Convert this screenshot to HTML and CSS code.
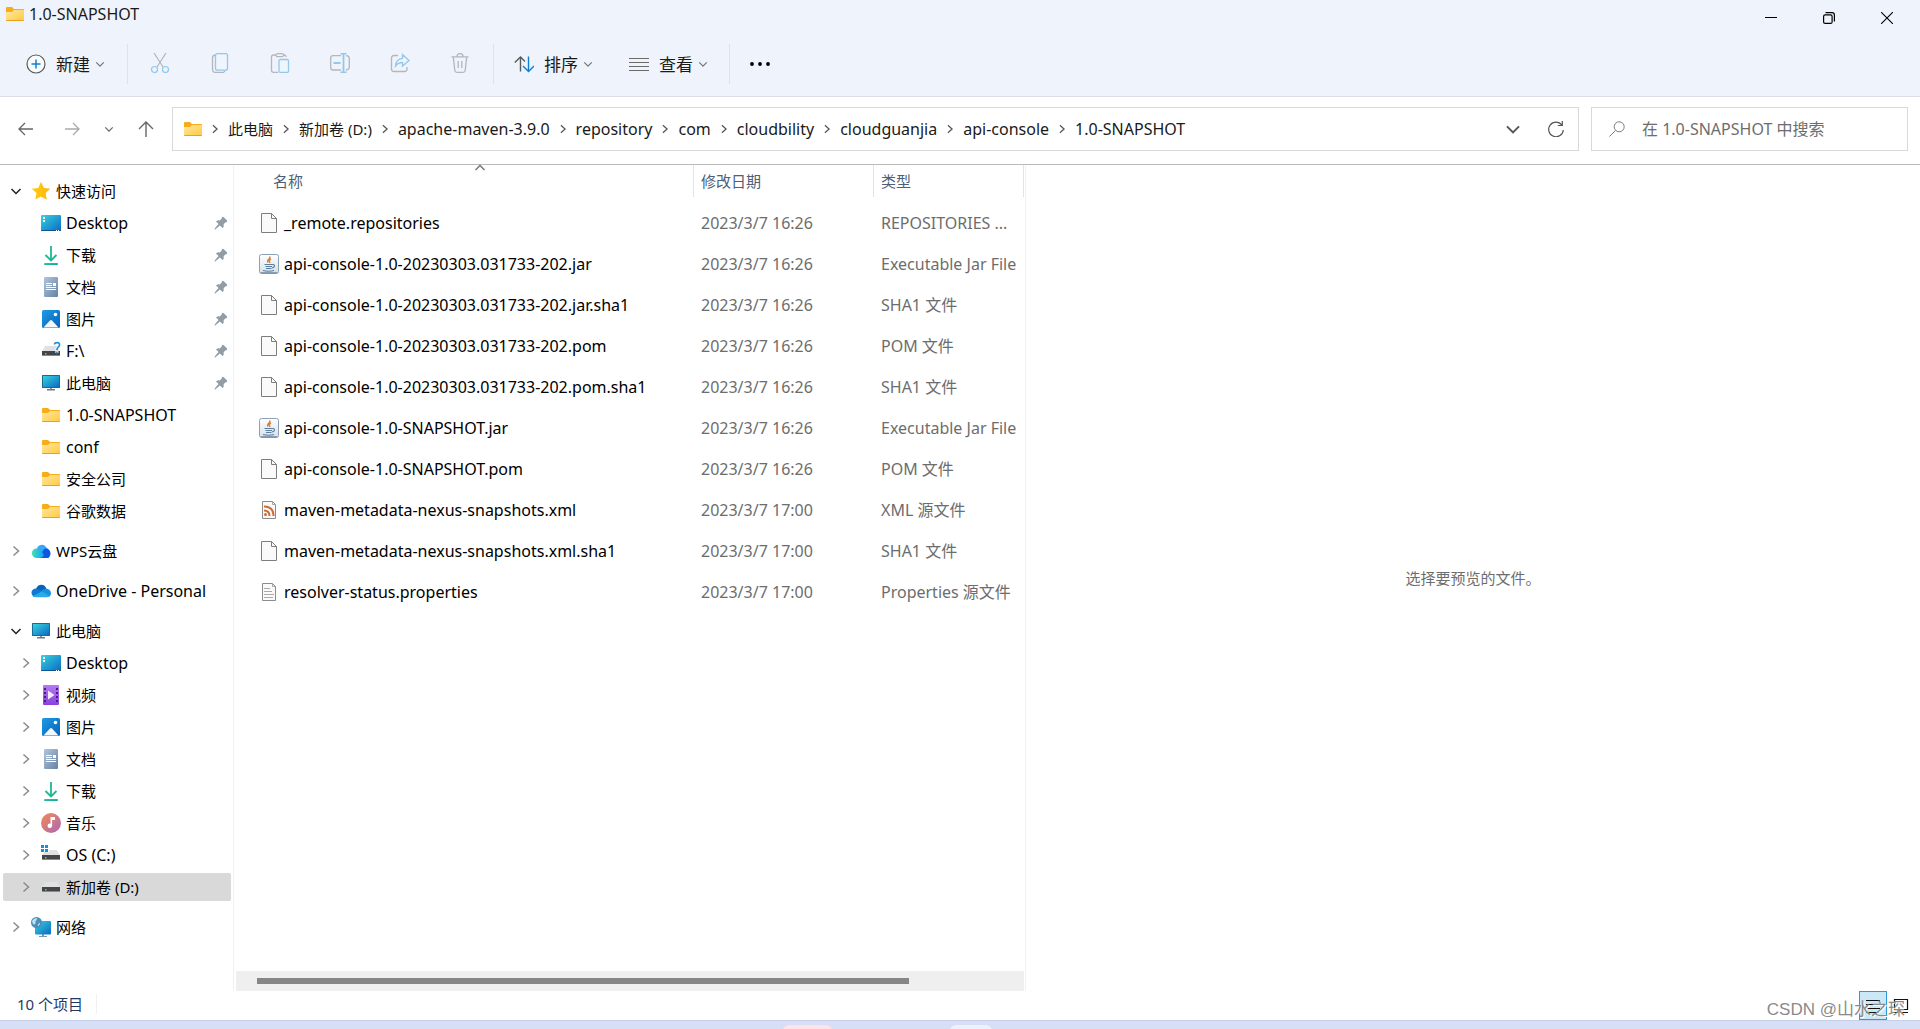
FILE: index.html
```html
<!DOCTYPE html>
<html lang="zh-CN">
<head>
<meta charset="utf-8">
<title>1.0-SNAPSHOT</title>
<link rel="stylesheet" href="styles.css">
</head>
<body>
<svg class="sprite" aria-hidden="true">
  <defs>
    <linearGradient id="g-folder" x1="0" y1="0" x2="1" y2="1"><stop offset="0" stop-color="#ffe7a2"/><stop offset="1" stop-color="#ffca3d"/></linearGradient>
    <linearGradient id="g-screen" x1="0" y1="0" x2="1" y2="1"><stop offset="0" stop-color="#36d3e0"/><stop offset="1" stop-color="#0c6ac2"/></linearGradient>
    <linearGradient id="g-down" x1="0" y1="0" x2="1" y2="1"><stop offset="0" stop-color="#3cc98a"/><stop offset="1" stop-color="#0fa3a3"/></linearGradient>
    <linearGradient id="g-doc" x1="0" y1="0" x2="1" y2="1"><stop offset="0" stop-color="#b4c5dc"/><stop offset="1" stop-color="#6483a8"/></linearGradient>
    <linearGradient id="g-pic" x1="0" y1="0" x2="1" y2="1"><stop offset="0" stop-color="#1e9be6"/><stop offset="1" stop-color="#0861b5"/></linearGradient>
    <linearGradient id="g-video" x1="0" y1="0" x2="0" y2="1"><stop offset="0" stop-color="#b57af2"/><stop offset="1" stop-color="#8a3fe0"/></linearGradient>
    <linearGradient id="g-music" x1="0" y1="0" x2="1" y2="1"><stop offset="0" stop-color="#f58a4f"/><stop offset="1" stop-color="#a967bd"/></linearGradient>
    <linearGradient id="g-wps" x1="0" y1="0" x2="1" y2="0"><stop offset="0" stop-color="#3be3b4"/><stop offset="1" stop-color="#1aa0f5"/></linearGradient>
    <linearGradient id="g-jar" x1="0" y1="0" x2="0" y2="1"><stop offset="0" stop-color="#ffffff"/><stop offset="1" stop-color="#d5e0ea"/></linearGradient>
  </defs>
  <symbol id="folder" viewBox="0 0 20 20"><path d="M1 4q0-1 1-1h5l2 2h9q1 0 1 1v4H1z" fill="#f8ac18"/><path d="M1 8h6l2-2h9q1 0 1 1v9q0 1-1 1H2q-1 0-1-1z" fill="url(#g-folder)"/><path d="M1 16h18q0 1-1 1H2q-1 0-1-1z" fill="#e8a31c"/></symbol>
  <symbol id="star" viewBox="0 0 20 20"><path d="M10 1l2.800 5.900 6.400.8-4.700 4.400 1.200 6.400L10 15.400l-5.700 3.100 1.200-6.400L.8 7.700l6.400-.8z" fill="#ffc50f"/><path d="M10 1l2.800 5.900 6.400.8-4.700 4.400 1.200 6.400L10 15.400z" fill="#fdb813" opacity=".5"/></symbol>
  <symbol id="desktop" viewBox="0 0 20 20"><rect y="2" width="20" height="16" rx="1" fill="url(#g-screen)"/><path d="M0 17h20q0 1-1 1H1q-1 0-1-1z" fill="#0a5593"/><path d="M2 4h2v2H2zM2 7h2v2H2z" fill="#fff"/><path d="M15 17h1v1h-1zM17 17h1v1h-1z" fill="#fff"/></symbol>
  <symbol id="download" viewBox="0 0 20 20"><path d="M10 1v14M4.500 10l5.500 5.500L15.500 10" fill="none" stroke="#1fb795" stroke-width="1.800"/><rect x="3" y="18" width="14" height="2" rx="1" fill="url(#g-down)"/></symbol>
  <symbol id="document" viewBox="0 0 20 20"><rect x="3" width="14" height="20" rx="1" fill="url(#g-doc)"/><path d="M5 6h6v1H5zM5 8h6v1H5zM12 6h3v3h-3zM5 10h10v1H5zM5 12h10v1H5z" fill="#fff"/></symbol>
  <symbol id="picture" viewBox="0 0 20 20"><rect x="1" y="1" width="18" height="18" rx="1.500" fill="url(#g-pic)"/><circle cx="14.500" cy="5.500" r="1.800" fill="#fff"/><path d="M2.500 18.500L9 11.500q1-1 2 0l6.500 7z" fill="#f2f8fd"/></symbol>
  <symbol id="drive" viewBox="0 0 20 20"><path d="M4 5h12l3 6H1z" fill="#dfe1e4"/><rect x="1" y="10" width="18" height="5" fill="#454545"/><rect x="1" y="14" width="18" height="1" fill="#8a8a8a"/><rect x="4" y="12" width="1.500" height="1.500" fill="#3ae04e"/></symbol>
  <symbol id="drive-unknown" viewBox="0 0 20 20"><use href="#drive"/><path d="M13.500 3.500C13.500 1 19 .6 18.500 4c-.2 2-2.600 2.200-2.600 5M15.900 10v2" fill="none" stroke="#fff" stroke-width="3"/><path d="M13.500 3.500C13.500 1 19 .6 18.500 4c-.2 2-2.600 2.200-2.600 5M15.900 10.500v2" fill="none" stroke="#1d8fd8" stroke-width="1.700"/></symbol>
  <symbol id="drive-os" viewBox="0 0 20 20"><use href="#drive"/><path d="M0 0h8v7H0z" fill="#fff"/><path d="M0 0h3v3H0zM4 0h3v3H4zM0 4h3v3H0zM4 4h3v3H4z" fill="#1090df"/></symbol>
  <symbol id="computer" viewBox="0 0 20 20"><path d="M9 14h2v3H9z" fill="#8298a8"/><rect x="6" y="16" width="8" height="1.500" fill="#6c7c88"/><rect x="1" y="2" width="18" height="13" rx=".5" fill="#186c91"/><rect x="2" y="3" width="16" height="11" fill="url(#g-screen)"/></symbol>
  <symbol id="wps" viewBox="0 0 20 20"><path d="M6 8a5 5 0 0 1 9-2l3 4v7H7z" fill="#37a5fa"/><path d="M13 8c4-2 6.500 1.500 6.500 4.500S17.500 17 15.500 17H8z" fill="#0c58df"/><path d="M9.500 16.900H5A4.700 4.700 0 1 1 9 9c2 1.500 5 5 3 6.500-.8 1-1.500 1.400-2.500 1.400z" fill="url(#g-wps)"/></symbol>
  <symbol id="onedrive" viewBox="0 0 20 20"><path d="M5 8C6.500 2.500 14 2 15.500 8L9 12z" fill="#0663b5"/><path d="M1.500 14.500C-1 11 1.500 7.500 5 7.500c3 0 5 2.500 8 4l-6 4.500H4q-1.700 0-2.500-1.500z" fill="#1078d4"/><path d="M11 9.500c2-2.500 8.500-2.500 9 2.500 0 2-1 4-4 4l-10-2z" fill="#1590df"/><path d="M2 15l9-4.500 8 4.500q-1 1.200-3 1.200H4.500Q3 16.200 2 15z" fill="#29a9ea"/></symbol>
  <symbol id="video" viewBox="0 0 20 20"><rect x="2" width="16" height="20" rx="1" fill="url(#g-video)"/><path d="M3 3h2v2H3zM3 7h2v2H3zM3 11h2v2H3zM3 15h2v2H3zM15 3h2v2h-2zM15 7h2v2h-2zM15 11h2v2h-2zM15 15h2v2h-2z" fill="#47216f"/><path d="M7 5.500v9L13.500 10z" fill="#f4eafc"/></symbol>
  <symbol id="music" viewBox="0 0 20 20"><circle cx="10" cy="10" r="10" fill="url(#g-music)"/><circle cx="8.800" cy="12.800" r="2.300" fill="#fff"/><path d="M9.500 4h4.500v3h-2.900v6H9.500z" fill="#fff"/></symbol>
  <symbol id="network" viewBox="0 0 20 20"><path d="M11 17h2v2h-2z" fill="#8298a8"/><rect x="8" y="19" width="8" height="1" fill="#8298a8"/><rect x="4" y="4" width="16" height="13.500" rx="1" fill="url(#g-screen)"/><circle cx="5.500" cy="5.500" r="5.500" fill="#4d8fb8"/><path d="M1 4c2-3 4-3 5-2.500S4 4 4.500 5.500 3 8 2 7zM6.500 8l2.500-2.500q.3 2-1.700 3.500z" fill="#bfe1f1"/></symbol>
  <symbol id="pin" viewBox="0 0 14 14"><path d="M8 1.200q.9-.9 1.800 0l3 3q.9.900 0 1.800-.6.500-1.300.3L9.600 8.200q.5 1.800-.4 3.200l-.6.600-2.700-2.600L1.500 13.300.5 13.500.7 12.500 4.600 8.100 2 5.500l.6-.6Q4 4 5.800 4.500L7.700 2.500Q7.500 1.800 8 1.200z" fill="#919ca5"/></symbol>
  <symbol id="file" viewBox="0 0 20 20"><path d="M2.500.5h10l5 5v14h-15z" fill="#fafafa" stroke="#7d7d7d"/><path d="M12.500.5v5h5" fill="none" stroke="#7d7d7d"/></symbol>
  <symbol id="jar" viewBox="0 0 20 20"><rect x=".5" y=".5" width="19" height="19" rx="2" fill="url(#g-jar)" stroke="#8ba0b4"/><path d="M2 18.800h16" stroke="#65809c"/><path d="M10.500 2.500c2 2-3.500 3-1.500 6M12 5c-2 1-2.200 2-1 4" fill="none" stroke="#e8792b" stroke-width="1.400"/><path d="M5.500 10.500h8M6.500 12.500h6.500M7 14.500h5.500M4 16.500q6 1.500 11 0M13.500 10.500q3 .2 1.500 2.500l-2 1" fill="none" stroke="#5c7f9f" stroke-width="1.200"/></symbol>
  <symbol id="xml" viewBox="0 0 20 20"><path d="M3.500 1.500h10l3 3v14h-13z" fill="#fafafa" stroke="#8b8b8b"/><path d="M13.500 1.500v3h3" fill="none" stroke="#a5a5a5"/><path d="M5 6.500q9.500 0 9.500 9.500M5 10.500q5.500 0 5.500 5.500" fill="none" stroke="#d06b32" stroke-width="2"/><circle cx="6.500" cy="14.500" r="1.500" fill="#d06b32"/></symbol>
  <symbol id="properties" viewBox="0 0 20 20"><path d="M3.500 1.500h10l3 3v14h-13z" fill="#fafafa" stroke="#8b8b8b"/><path d="M13.500 1.500v3h3" fill="none" stroke="#a5a5a5"/><path d="M5 6.500h6M5 9.500h8M5 12.500h10M5 15.500h9" stroke="#a9a9a9"/></symbol>
  <symbol id="chev-right" viewBox="0 0 12 12"><path d="M3.500 1.500L8.500 6l-5 4.500" fill="none" stroke="currentColor" stroke-width="1.500"/></symbol>
  <symbol id="chev-down" viewBox="0 0 12 12"><path d="M1.500 4L6 8.500 10.500 4" fill="none" stroke="currentColor" stroke-width="1.500"/></symbol>
  <symbol id="new" viewBox="0 0 20 20"><circle cx="10" cy="10" r="9" fill="#f9fafc" stroke="#5b5b5b" stroke-width="1.200"/><path d="M10 5.500v9M5.500 10h9" stroke="#0f7fd6" stroke-width="1.500"/></symbol>
  <symbol id="cut" viewBox="0 0 20 20"><g fill="none" stroke-width="1.200"><path d="M4 0l9 14M16 0L7 14" stroke="#b4b6bb"/><circle cx="4.500" cy="16.500" r="3" stroke="#93c7ec"/><circle cx="15.500" cy="16.500" r="3" stroke="#93c7ec"/></g></symbol>
  <symbol id="copy" viewBox="0 0 20 20"><g fill="none" stroke-width="1.300"><path d="M5 2q-2.500.5-2.500 3v11q0 3.500 3.500 3.500h6q2 0 3-1.500" stroke="#b4b6bb"/><rect x="5.500" y=".7" width="12" height="16.500" rx="2" fill="#eef5fc" stroke="#93c7ec"/></g></symbol>
  <symbol id="paste" viewBox="0 0 20 20"><g fill="none" stroke-width="1.300"><path d="M8 19.300H3.500q-2 0-2-2V4q0-2 2-2H6M13 2h1.500Q16 2 16 4" stroke="#b4b6bb"/><rect x="6" y=".7" width="7.500" height="3" rx="1.500" stroke="#b4b6bb"/><rect x="9" y="6.500" width="9.500" height="13" rx="1.500" fill="#eef5fc" stroke="#93c7ec"/></g></symbol>
  <symbol id="rename" viewBox="0 0 20 20"><g fill="none" stroke-width="1.300"><path d="M11 17H3q-2.300 0-2.300-2.300V5Q.7 2.700 3 2.700h8M16 2.700q3.300 0 3.300 2.800V14q0 2.700-3.300 3" stroke="#b4b6bb"/><path d="M10.500.7h6M10.500 19.300h6M13.500.7v18.600M3.500 10h7" stroke="#93c7ec" stroke-width="1.800"/></g></symbol>
  <symbol id="share" viewBox="0 0 20 20"><g fill="none" stroke-width="1.300"><path d="M8 2.500H4Q1.500 2.500 1.500 5v11q0 2.500 2.500 2.500h10.500q2.500 0 2.500-2.500v-2" stroke="#b4b6bb"/><path d="M12.500 1.500L19 7.500l-6.500 5.500V9.500Q8 9.500 5.500 13 6 6 12.500 5.300z" stroke="#93c7ec" fill="#eef5fc"/></g></symbol>
  <symbol id="trash" viewBox="0 0 20 20"><g fill="none" stroke="#b4b6bb" stroke-width="1.300"><path d="M1.500 3.800h17M7 3.500Q7 .7 10 .7t3 2.800M3.300 4l1.500 13.500q.3 1.800 2 1.800h6.400q1.700 0 2-1.800L16.700 4M8.200 8v7M11.800 8v7"/></g></symbol>
  <symbol id="sort" viewBox="0 0 20 20"><g fill="none" stroke-width="1.400"><path d="M6.500 17.500V3M.8 8.500L6.500 3 11 7.500" stroke="#5b5b5b"/><path d="M14.500 2.500V17M9 12l5.500 5.500L20 12" stroke="#0f7fd6"/></g></symbol>
  <symbol id="view" viewBox="0 0 20 20"><path d="M0 4.500h20M0 8.500h20M0 12.500h20M0 16.500h20" stroke="#6a6a6a"/></symbol>
  <symbol id="dots" viewBox="0 0 20 20"><circle cx="2" cy="10" r="1.900"/><circle cx="10" cy="10" r="1.900"/><circle cx="18" cy="10" r="1.900"/></symbol>
  <symbol id="left" viewBox="0 0 16 16"><path d="M1 8h14M7 2L1 8l6 6" fill="none" stroke="currentColor" stroke-width="1.300"/></symbol>
  <symbol id="right" viewBox="0 0 16 16"><path d="M15 8H1M9 2l6 6-6 6" fill="none" stroke="currentColor" stroke-width="1.300"/></symbol>
  <symbol id="up" viewBox="0 0 16 16"><path d="M8 16V1M1 8l7-7 7 7" fill="none" stroke="currentColor" stroke-width="1.400"/></symbol>
  <symbol id="refresh" viewBox="0 0 16 16"><path d="M13.800 4A7.300 7.300 0 1 0 15.300 9M14.300 0v4.500H9.800" fill="none" stroke="currentColor" stroke-width="1.200"/></symbol>
  <symbol id="search" viewBox="0 0 16 16"><circle cx="10.200" cy="5.800" r="5" fill="none" stroke="#7b7b7b"/><path d="M6.500 9.500l-6 6" stroke="#7b7b7b"/></symbol>
  <symbol id="min" viewBox="0 0 12 12"><path d="M0 5.500h12" stroke="#000"/></symbol>
  <symbol id="restore" viewBox="0 0 12 12"><rect x=".6" y="2.900" width="8.500" height="8.500" rx="1.500" fill="none" stroke="#000" stroke-width="1.200"/><path d="M2.500.6H9q2.400 0 2.400 2.400v6.500" fill="none" stroke="#000" stroke-width="1.200"/></symbol>
  <symbol id="close" viewBox="0 0 12 12"><path d="M0 0l12 12M12 0L0 12" stroke="#000" stroke-width="1.100"/></symbol>
</svg>

<div class="window">
  <header class="top">
    <div class="titlebar">
      <h1 class="title"><svg class="i20"><use href="#folder"/></svg>1.0-SNAPSHOT</h1>
      <div class="controls">
        <button aria-label="最小化"><svg class="i12"><use href="#min"/></svg></button>
        <button aria-label="还原"><svg class="i12"><use href="#restore"/></svg></button>
        <button aria-label="关闭"><svg class="i12"><use href="#close"/></svg></button>
      </div>
    </div>
    <div class="toolbar">
      <button class="cmd cmd-new"><svg class="i20"><use href="#new"/></svg><span>新建</span><svg class="caret"><use href="#chev-down"/></svg></button>
      <div class="tools">
        <button aria-label="剪切" disabled><svg class="i20"><use href="#cut"/></svg></button>
        <button aria-label="复制" disabled><svg class="i20"><use href="#copy"/></svg></button>
        <button aria-label="粘贴" disabled><svg class="i20"><use href="#paste"/></svg></button>
        <button aria-label="重命名" disabled><svg class="i20"><use href="#rename"/></svg></button>
        <button aria-label="共享" disabled><svg class="i20"><use href="#share"/></svg></button>
        <button aria-label="删除" disabled><svg class="i20"><use href="#trash"/></svg></button>
      </div>
      <div class="arrange">
        <button class="cmd"><svg class="i20"><use href="#sort"/></svg><span>排序</span><svg class="caret"><use href="#chev-down"/></svg></button>
        <button class="cmd"><svg class="i20"><use href="#view"/></svg><span>查看</span><svg class="caret"><use href="#chev-down"/></svg></button>
      </div>
      <button class="more" aria-label="更多"><svg class="i20"><use href="#dots"/></svg></button>
    </div>
  </header>

  <div class="location">
    <div class="history">
      <button aria-label="后退"><svg class="i16"><use href="#left"/></svg></button>
      <button class="dim" aria-label="前进"><svg class="i16"><use href="#right"/></svg></button>
      <button class="recent" aria-label="最近浏览的位置"><svg class="i10"><use href="#chev-down"/></svg></button>
      <button aria-label="向上"><svg class="i16"><use href="#up"/></svg></button>
    </div>
    <div class="address">
      <svg class="i20"><use href="#folder"/></svg>
      <nav class="crumbs" aria-label="路径">
        <svg class="i10"><use href="#chev-right"/></svg><a class="zh" href="#">此电脑</a>
        <svg class="i10"><use href="#chev-right"/></svg><a class="zh" href="#">新加卷 (D:)</a>
        <svg class="i10"><use href="#chev-right"/></svg><a href="#">apache-maven-3.9.0</a>
        <svg class="i10"><use href="#chev-right"/></svg><a href="#">repository</a>
        <svg class="i10"><use href="#chev-right"/></svg><a href="#">com</a>
        <svg class="i10"><use href="#chev-right"/></svg><a href="#">cloudbility</a>
        <svg class="i10"><use href="#chev-right"/></svg><a href="#">cloudguanjia</a>
        <svg class="i10"><use href="#chev-right"/></svg><a href="#">api-console</a>
        <svg class="i10"><use href="#chev-right"/></svg><a href="#">1.0-SNAPSHOT</a>
      </nav>
      <button aria-label="以前的位置"><svg class="i16"><use href="#chev-down"/></svg></button>
      <button aria-label="刷新"><svg class="i16"><use href="#refresh"/></svg></button>
    </div>
    <label class="search"><svg class="i16"><use href="#search"/></svg><input type="text" aria-label="搜索" placeholder="在 1.0-SNAPSHOT 中搜索"></label>
  </div>

  <main class="body">
    <nav class="tree" aria-label="导航窗格">
      <ul>
        <li class="node root open"><button aria-label="折叠"><svg class="i12"><use href="#chev-down"/></svg></button><a class="zh" href="#"><svg class="i20"><use href="#star"/></svg>快速访问</a></li>
        <li class="node leaf"><a href="#"><svg class="i20"><use href="#desktop"/></svg>Desktop</a><svg class="pin"><use href="#pin"/></svg></li>
        <li class="node leaf"><a class="zh" href="#"><svg class="i20"><use href="#download"/></svg>下载</a><svg class="pin"><use href="#pin"/></svg></li>
        <li class="node leaf"><a class="zh" href="#"><svg class="i20"><use href="#document"/></svg>文档</a><svg class="pin"><use href="#pin"/></svg></li>
        <li class="node leaf"><a class="zh" href="#"><svg class="i20"><use href="#picture"/></svg>图片</a><svg class="pin"><use href="#pin"/></svg></li>
        <li class="node leaf"><a href="#"><svg class="i20"><use href="#drive-unknown"/></svg>F:\</a><svg class="pin"><use href="#pin"/></svg></li>
        <li class="node leaf"><a class="zh" href="#"><svg class="i20"><use href="#computer"/></svg>此电脑</a><svg class="pin"><use href="#pin"/></svg></li>
        <li class="node leaf"><a href="#"><svg class="i20"><use href="#folder"/></svg>1.0-SNAPSHOT</a></li>
        <li class="node leaf"><a href="#"><svg class="i20"><use href="#folder"/></svg>conf</a></li>
        <li class="node leaf"><a class="zh" href="#"><svg class="i20"><use href="#folder"/></svg>安全公司</a></li>
        <li class="node leaf"><a class="zh" href="#"><svg class="i20"><use href="#folder"/></svg>谷歌数据</a></li>
      </ul>
      <ul>
        <li class="node root"><button aria-label="展开"><svg class="i12"><use href="#chev-right"/></svg></button><a class="zh" href="#"><svg class="i20"><use href="#wps"/></svg>WPS云盘</a></li>
      </ul>
      <ul>
        <li class="node root"><button aria-label="展开"><svg class="i12"><use href="#chev-right"/></svg></button><a href="#"><svg class="i20"><use href="#onedrive"/></svg>OneDrive - Personal</a></li>
      </ul>
      <ul>
        <li class="node root open"><button aria-label="折叠"><svg class="i12"><use href="#chev-down"/></svg></button><a class="zh" href="#"><svg class="i20"><use href="#computer"/></svg>此电脑</a></li>
        <li class="node"><button aria-label="展开"><svg class="i12"><use href="#chev-right"/></svg></button><a href="#"><svg class="i20"><use href="#desktop"/></svg>Desktop</a></li>
        <li class="node"><button aria-label="展开"><svg class="i12"><use href="#chev-right"/></svg></button><a class="zh" href="#"><svg class="i20"><use href="#video"/></svg>视频</a></li>
        <li class="node"><button aria-label="展开"><svg class="i12"><use href="#chev-right"/></svg></button><a class="zh" href="#"><svg class="i20"><use href="#picture"/></svg>图片</a></li>
        <li class="node"><button aria-label="展开"><svg class="i12"><use href="#chev-right"/></svg></button><a class="zh" href="#"><svg class="i20"><use href="#document"/></svg>文档</a></li>
        <li class="node"><button aria-label="展开"><svg class="i12"><use href="#chev-right"/></svg></button><a class="zh" href="#"><svg class="i20"><use href="#download"/></svg>下载</a></li>
        <li class="node"><button aria-label="展开"><svg class="i12"><use href="#chev-right"/></svg></button><a class="zh" href="#"><svg class="i20"><use href="#music"/></svg>音乐</a></li>
        <li class="node"><button aria-label="展开"><svg class="i12"><use href="#chev-right"/></svg></button><a href="#"><svg class="i20"><use href="#drive-os"/></svg>OS (C:)</a></li>
        <li class="node selected"><button aria-label="展开"><svg class="i12"><use href="#chev-right"/></svg></button><a class="zh" href="#"><svg class="i20"><use href="#drive"/></svg>新加卷 (D:)</a></li>
      </ul>
      <ul>
        <li class="node root"><button aria-label="展开"><svg class="i12"><use href="#chev-right"/></svg></button><a class="zh" href="#"><svg class="i20"><use href="#network"/></svg>网络</a></li>
      </ul>
    </nav>

    <section class="files">
      <table>
        <colgroup><col class="c-name"><col class="c-date"><col class="c-type"></colgroup>
        <thead><tr><th>名称<svg class="sorted"><use href="#chev-down"/></svg></th><th>修改日期</th><th>类型</th></tr></thead>
        <tbody>
          <tr><td><div class="name"><svg class="i20"><use href="#file"/></svg>_remote.repositories</div></td><td>2023/3/7 16:26</td><td>REPOSITORIES ...</td></tr>
          <tr><td><div class="name"><svg class="i20"><use href="#jar"/></svg>api-console-1.0-20230303.031733-202.jar</div></td><td>2023/3/7 16:26</td><td>Executable Jar File</td></tr>
          <tr><td><div class="name"><svg class="i20"><use href="#file"/></svg>api-console-1.0-20230303.031733-202.jar.sha1</div></td><td>2023/3/7 16:26</td><td>SHA1 文件</td></tr>
          <tr><td><div class="name"><svg class="i20"><use href="#file"/></svg>api-console-1.0-20230303.031733-202.pom</div></td><td>2023/3/7 16:26</td><td>POM 文件</td></tr>
          <tr><td><div class="name"><svg class="i20"><use href="#file"/></svg>api-console-1.0-20230303.031733-202.pom.sha1</div></td><td>2023/3/7 16:26</td><td>SHA1 文件</td></tr>
          <tr><td><div class="name"><svg class="i20"><use href="#jar"/></svg>api-console-1.0-SNAPSHOT.jar</div></td><td>2023/3/7 16:26</td><td>Executable Jar File</td></tr>
          <tr><td><div class="name"><svg class="i20"><use href="#file"/></svg>api-console-1.0-SNAPSHOT.pom</div></td><td>2023/3/7 16:26</td><td>POM 文件</td></tr>
          <tr><td><div class="name"><svg class="i20"><use href="#xml"/></svg>maven-metadata-nexus-snapshots.xml</div></td><td>2023/3/7 17:00</td><td>XML 源文件</td></tr>
          <tr><td><div class="name"><svg class="i20"><use href="#file"/></svg>maven-metadata-nexus-snapshots.xml.sha1</div></td><td>2023/3/7 17:00</td><td>SHA1 文件</td></tr>
          <tr><td><div class="name"><svg class="i20"><use href="#properties"/></svg>resolver-status.properties</div></td><td>2023/3/7 17:00</td><td>Properties 源文件</td></tr>
        </tbody>
      </table>
      <div class="scrollbar"><div class="thumb"></div></div>
    </section>

    <aside class="preview"><p>选择要预览的文件。</p></aside>
  </main>

  <footer class="status">
    <span class="count">10 个项目</span>
    <div class="views">
      <button class="on" aria-label="详细信息"><svg class="i16" viewBox="0 0 16 16"><path d="M1 2.500h14M1 6.500h14M1 10.500h14M1 14.500h14" stroke="#111" stroke-width="1.200"/></svg></button>
      <button aria-label="大图标"><svg class="i16" viewBox="0 0 16 16"><path d="M1.500 1.500h13v10h-13zM1 14.500h14" fill="none" stroke="#111" stroke-width="1.200"/></svg></button>
    </div>
    <span class="watermark">CSDN @山水之琛</span>
  </footer>
</div>
<div class="taskbar"><span class="widget warm"></span><span class="widget cool"></span></div>
</body>
</html>
```
FILE: styles.css
```css
* { box-sizing: border-box; }

body {
  margin: 0;
  min-height: 100vh;
  display: flex;
  flex-direction: column;
  background: #fff;
  color: #1a1a1a;
  font: 16px/20px "Noto Sans", "Noto Sans CJK SC", sans-serif;
}

button, input { font: inherit; color: inherit; border: 0; background: none; padding: 0; }
button { display: flex; align-items: center; justify-content: center; }
a { color: inherit; text-decoration: none; white-space: nowrap; }
svg { display: block; flex: none; }
ul { list-style: none; margin: 0; padding: 0; }

.sprite { position: absolute; width: 0; height: 0; }
.i20 { width: 20px; height: 20px; }
.i16 { width: 16px; height: 16px; }
.i12 { width: 12px; height: 12px; }
.i10 { width: 10px; height: 10px; }
.zh { font-size: 15px; }

.window { flex: 1; display: flex; flex-direction: column; }

/* title bar and commands */
.top { background: #eff3fb; border-bottom: 1px solid #dcdfe6; }
.titlebar { display: flex; justify-content: space-between; height: 32px; padding-right: 4px; }
.title { display: flex; align-items: center; gap: 4px; height: 28px; margin: 0; padding-left: 5px; font-size: 16px; font-weight: 400; }
.controls { display: flex; height: 36px; }
.controls button { width: 58px; }
.toolbar { display: flex; align-items: center; height: 64px; }
.cmd { gap: 10px; padding-left: 20px; font-size: 17px; line-height: 24px; }
.cmd span { padding-top: 2px; }
.caret { width: 10px; height: 10px; margin-left: -5px; color: #777; }
.cmd-new { width: 127px; justify-content: flex-start; padding-left: 26px; }
.tools, .arrange { display: flex; align-items: center; height: 40px; border: solid #dfe2e8; border-width: 0 1px; }
.tools { padding: 0 3px 0 2px; }
.tools button, .more { width: 60px; height: 40px; }
.tools button { padding-bottom: 2px; }
.arrange { border-left: 0; gap: 16px; padding-right: 21px; }

/* address row */
.location { display: flex; align-items: flex-start; height: 68px; padding: 10px 12px 0 3px; border-bottom: 1px solid #bababa; }
.history { display: flex; width: 169px; color: #666; }
.history button { width: 46px; height: 44px; }
.history .recent { width: 28px; }
.history .dim { color: #aaa; }
.address { flex: 1; display: flex; align-items: center; height: 44px; padding: 0 1px 0 10px; border: 1px solid #d9d9d9; color: #555; }
.address button { width: 43px; height: 42px; }
.crumbs { flex: 1; display: flex; align-items: center; gap: 8px; padding-left: 7px; }
.crumbs a { color: #1a1a1a; }
.search { display: flex; align-items: center; gap: 17px; width: 317px; height: 44px; margin-left: 12px; padding-left: 17px; border: 1px solid #d9d9d9; }
.search input { flex: 1; min-width: 0; height: 24px; outline: 0; font-size: 16px; }
.search input::placeholder { color: #6d6d6d; opacity: 1; }

/* panes */
.body { flex: 1; display: flex; }
.tree { display: flex; flex-direction: column; gap: 12px; width: 234px; padding: 12px 2px 8px 3px; border-right: 1px solid #f1f1f1; }
.tree ul { display: flex; flex-direction: column; gap: 4px; }
.node { display: flex; align-items: center; height: 28px; padding: 0 3px 0 13px; border-radius: 2px; }
.root { padding-left: 3px; }
.leaf { padding-left: 38px; }
.node button { width: 20px; height: 20px; margin-right: 5px; color: #8a8a8a; }
.open button { color: #222; }
.node a { flex: 1; display: flex; align-items: center; gap: 5px; color: #000; }
.selected { background: #d9d9d9; }
.pin { width: 14px; height: 14px; }

.files { display: flex; flex-direction: column; justify-content: space-between; width: 792px; padding: 0 1px 0 2px; border-right: 1px solid #f1f1f1; }
table { width: 100%; table-layout: fixed; border-collapse: separate; border-spacing: 0; }
.c-name { width: 458px; }
.c-date { width: 180px; }
th { position: relative; height: 32px; padding: 0 0 0 7px; text-align: left; font-weight: 400; font-size: 15px; color: #4c607a; border-right: 1px solid #e3e3e3; }
th:first-child { padding-left: 37px; }
.sorted { position: absolute; top: -3px; left: 238px; width: 12px; height: 12px; color: #777; transform: rotate(180deg); }
tbody::before { content: ""; display: block; height: 5px; }
td { height: 41px; padding: 0 0 0 7px; color: #6d6d6d; white-space: nowrap; }
td:first-child { padding-left: 23px; color: #000; }
.name { display: flex; align-items: center; gap: 5px; }
.scrollbar { display: flex; align-items: center; height: 20px; padding-left: 21px; background: #efefef; }
.thumb { width: 85%; height: 6px; background: #868686; }

.preview { flex: 1; display: flex; align-items: center; justify-content: center; color: #6d6d6d; font-size: 15px; }
.preview p { margin: 0; }

/* status bar */
.status { position: relative; display: flex; align-items: flex-start; justify-content: space-between; height: 29px; padding: 0 5px 0 17px; }
.count { margin-top: 3px; padding-right: 13px; border-right: 1px solid #f1f1f1; color: #1f3864; font-size: 15px; }
.views { display: flex; height: 29px; }
.views button { width: 28px; height: 29px; }
.views .on { background: #cbe8f7; border: 1px solid #2a9bd8; }
.watermark { position: absolute; right: 15px; bottom: -1px; font: 17px/22px "Liberation Sans", "Noto Sans CJK SC", sans-serif; color: #8a8a8a; text-shadow: 1px 1px 0 #fff; }

.taskbar { display: flex; gap: 118px; height: 9px; padding: 4px 0 0 783px; overflow: hidden; background: #d6dff5; border-top: 1px solid #c6d0ea; }
.widget { height: 12px; border-radius: 6px; }
.warm { width: 49px; background: #ffe3e5; }
.cool { width: 42px; background: #edf1fb; }
```
